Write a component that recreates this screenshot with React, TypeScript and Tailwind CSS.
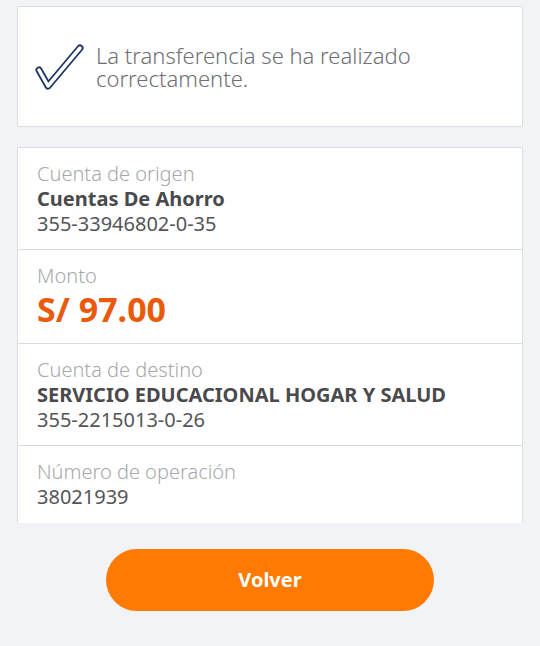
import React from "react";

function Row({ label, children, last }: { label: string; children: React.ReactNode; last?: boolean }) {
  return (
    <div className={`px-[19px] py-[13px] ${last ? "" : "border-b border-[#d9dadf]"}`}>
      <div className="text-[20px] leading-[25px] text-[#a8a8ab] font-light">{label}</div>
      {children}
    </div>
  );
}

export default function App() {
  return (
    <div
      className="w-[540px] h-[646px] bg-[#f2f3f7] flex flex-col"
      style={{ fontFamily: "'Noto Sans', Roboto, sans-serif" }}
    >
      <div className="px-[17px] pt-[6px]">
        <div className="h-[121px] bg-white border border-[#dcdde2] rounded-[2px] flex items-center pl-[17px]">
          <svg width="50" height="46" viewBox="0 0 50 46" className="shrink-0 mr-[11px]">
            <path d="M4 26 L13 42 L45 4" fill="none" stroke="#1d3461" strokeWidth="7" strokeLinecap="round" strokeLinejoin="round" />
            <path d="M4 26 L13 42 L45 4" fill="none" stroke="#ffffff" strokeWidth="3.5" strokeLinecap="round" strokeLinejoin="round" />
          </svg>
          <div className="text-[22px] leading-[23px] text-[#6f6f73] font-light">
            La transferencia se ha realizado
            <br />
            correctamente.
          </div>
        </div>
        <div className="mt-[20px] h-[376px] overflow-hidden bg-white border-x border-t border-[#dcdde2] rounded-t-[2px]">
          <Row label="Cuenta de origen">
            <div className="text-[20px] leading-[25px] font-bold text-[#4a4a4d]">Cuentas De Ahorro</div>
            <div className="text-[20px] leading-[25px] text-[#555558]">355-33946802-0-35</div>
          </Row>
          <Row label="Monto">
            <div className="text-[34px] leading-[42px] font-bold text-[#ea5a0c]">S/ 97.00</div>
          </Row>
          <Row label="Cuenta de destino">
            <div className="text-[20px] leading-[25px] font-bold text-[#4a4a4d]">SERVICIO EDUCACIONAL HOGAR Y SALUD</div>
            <div className="text-[20px] leading-[25px] text-[#555558]">355-2215013-0-26</div>
          </Row>
          <Row label="Número de operación" last>
            <div className="text-[20px] leading-[25px] text-[#555558]">38021939</div>
          </Row>
        </div>
      </div>
      <div className="flex justify-center pt-[26px]">
        <button className="w-[328px] h-[62px] rounded-full bg-[#ff7a00] text-white text-[20px] font-bold">
          Volver
        </button>
      </div>
    </div>
  );
}
